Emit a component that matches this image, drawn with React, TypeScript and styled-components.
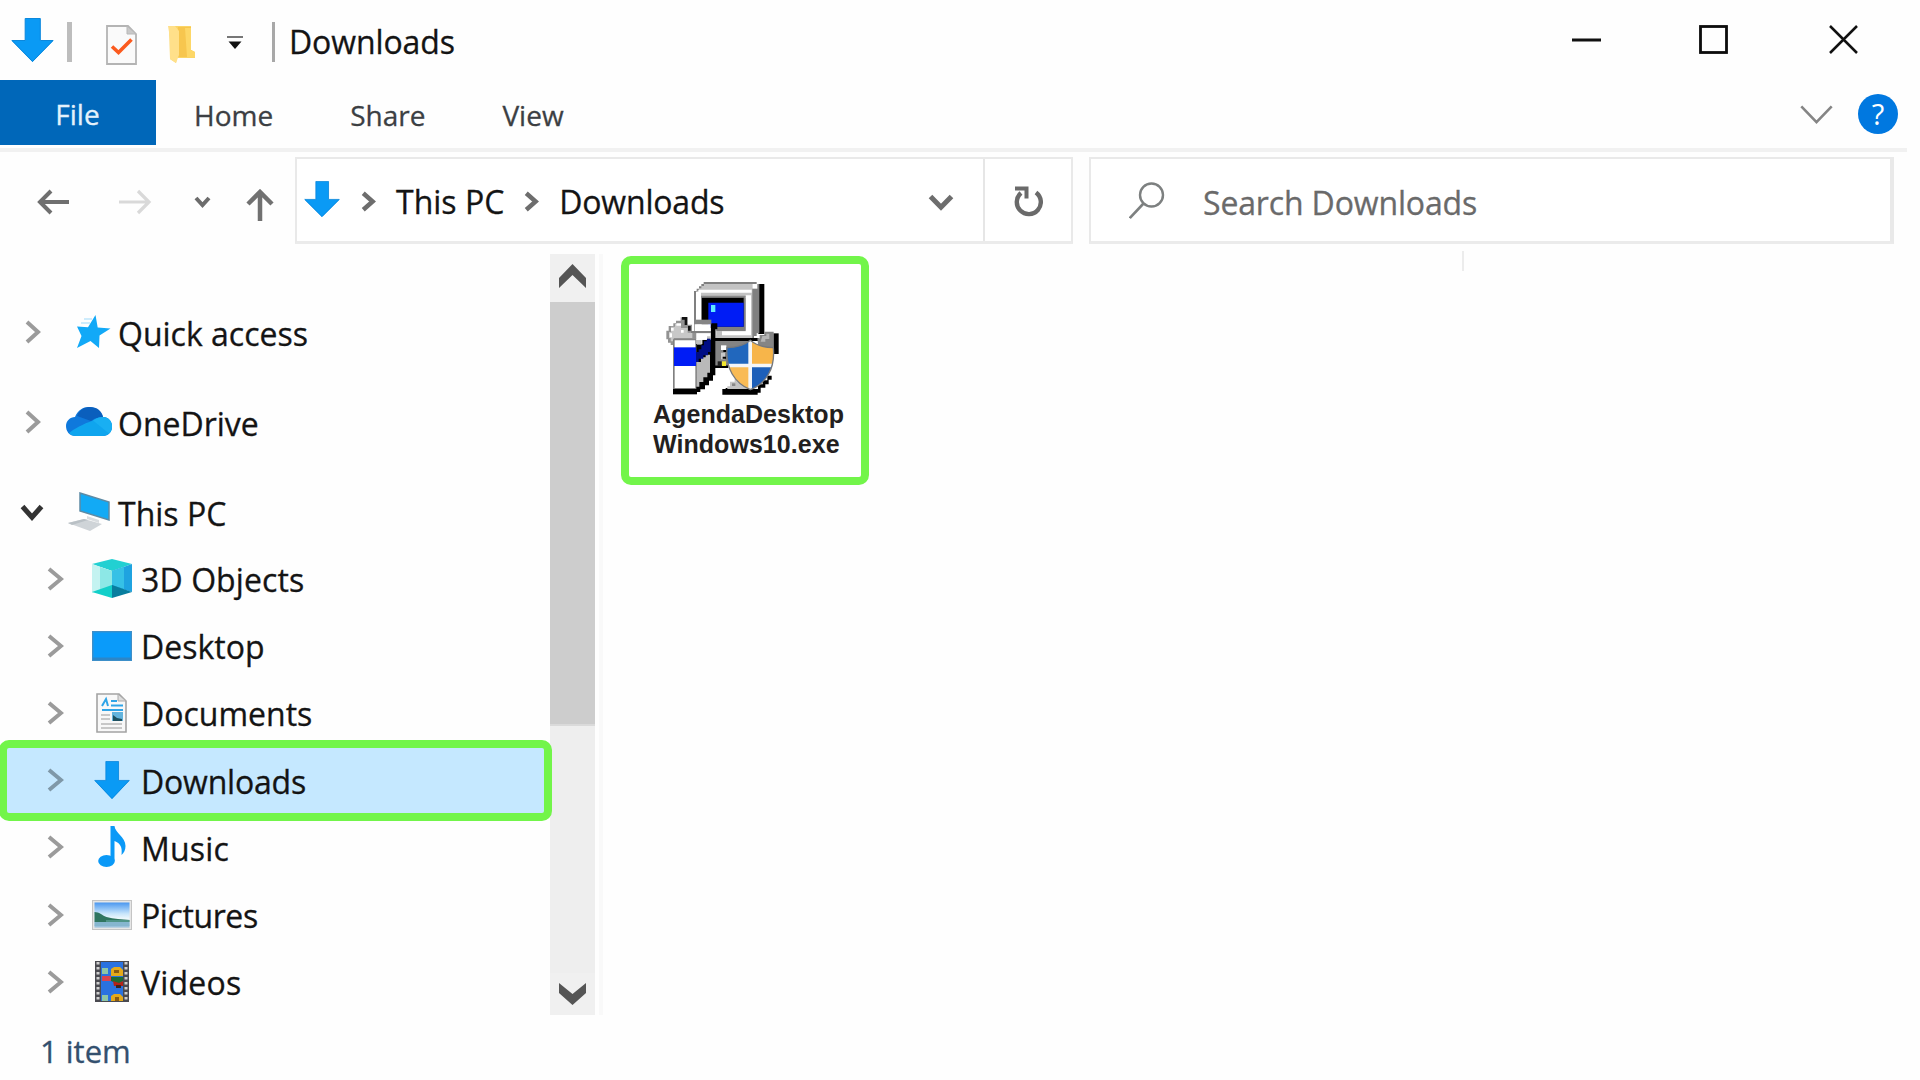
import React from "react";
import styled, { createGlobalStyle } from "styled-components";

const GREEN = "#72f54a";
const UI_FONT = `"Open Sans", "Noto Sans", sans-serif`;

const GlobalStyle = createGlobalStyle`
  * { box-sizing: border-box; }
  body { margin: 0; background: #fefefe; overflow: hidden; }
  svg { display: block; flex: none; }
`;

const Window = styled.div`
  width: 1920px;
  height: 1080px;
  display: flex;
  flex-direction: column;
  background: #fefefe;
  color: #111;
  font-family: ${UI_FONT};
  font-size: 32px;
`;

const Label = styled.span<{ $size?: number; $color?: string; $spacing?: number; $drop?: number }>`
  font-size: ${(p) => p.$size ?? 32}px;
  line-height: 44px;
  color: ${(p) => p.$color ?? "#141414"};
  -webkit-text-stroke: 0.3px currentColor;
  letter-spacing: ${(p) => p.$spacing ?? 0}px;
  padding-top: ${(p) => p.$drop ?? 0}px;
  white-space: nowrap;
`;

const TitleBar = styled.header`
  height: 80px;
  display: flex;
  align-items: flex-start;
  padding: 18px 62px 0 11px;
`;

const Slot = styled.div<{ $left?: number; $top?: number }>`
  margin-left: ${(p) => p.$left ?? 0}px;
  margin-top: ${(p) => p.$top ?? 0}px;
  flex: none;
  display: flex;
`;

const Divider = styled.div<{ $width: number; $left: number; $color: string }>`
  width: ${(p) => p.$width}px;
  height: 40px;
  margin: 4px 0 0 ${(p) => p.$left}px;
  background: ${(p) => p.$color};
`;

const WindowButtons = styled.div`
  margin: 7px 0 0 auto;
  display: grid;
  grid-template-columns: 127px 130px 29px;
`;

const Ribbon = styled.nav`
  width: 1907px;
  height: 72px;
  display: flex;
  align-items: flex-start;
  border-bottom: 4px solid #f1f1f1;
`;

const FileTab = styled.div`
  width: 156px;
  height: 65px;
  display: flex;
  justify-content: center;
  padding: 12px 1px 0 0;
  background: #0067b9;
`;

const Tab = styled.div<{ $left: number }>`
  margin-left: ${(p) => p.$left}px;
  padding-top: 12px;
`;

const RibbonTools = styled.div`
  margin: 14px 9px 0 auto;
  display: flex;
  align-items: center;
  gap: 25px;
`;

const Help = styled.div`
  width: 40px;
  height: 40px;
  border-radius: 50%;
  background: #0078e0;
  color: #fff;
  display: flex;
  align-items: center;
  justify-content: center;
  font-size: 29px;
  line-height: 40px;
`;

const NavBar = styled.div`
  height: 102px;
  display: flex;
  padding-top: 5px;
`;

const NavButtons = styled.div`
  width: 295px;
  height: 90px;
  display: flex;
  align-items: center;
  padding-left: 37px;
`;

const Field = styled.div<{ $width: number; $right?: number }>`
  width: ${(p) => p.$width}px;
  height: 87px;
  display: flex;
  align-items: center;
  border: 2px solid #e9e9e9;
  border-bottom: 3px solid #ebebeb;
  border-right-width: ${(p) => p.$right ?? 2}px;
  background: #fff;
`;

const SearchField = styled(Field)`
  margin-left: 16px;
`;

const FieldRule = styled.div`
  width: 2px;
  height: 82px;
  background: #e6e6e6;
`;

const Body = styled.main`
  height: 761px;
  display: flex;
`;

const Sidebar = styled.aside`
  width: 550px;
  padding-top: 33px;
`;

const Row = styled.div<{ $height: number; $top?: number; $child?: boolean }>`
  position: relative;
  height: ${(p) => p.$height}px;
  margin-top: ${(p) => p.$top ?? 0}px;
  display: grid;
  grid-template-columns: ${(p) => (p.$child ? "44px 41px 1fr" : "46px 52px 1fr")};
  align-items: center;
  padding-left: ${(p) => (p.$child ? 47 : 20)}px;
`;

const Selection = styled.div`
  position: absolute;
  left: -1px;
  top: -6.8px;
  width: 553px;
  height: 81px;
  border: 8px solid ${GREEN};
  border-radius: 10px;
  background: #c5e8ff;
`;

const Cell = styled.div`
  position: relative;
  display: flex;
  align-items: center;
`;

const Center = styled(Cell)`
  justify-content: center;
`;

const ScrollBar = styled.div`
  width: 45px;
  display: flex;
  flex-direction: column;
  background: #eee;
`;

const ScrollButton = styled.div<{ $height: number; $lift?: number }>`
  height: ${(p) => p.$height}px;
  display: flex;
  align-items: center;
  justify-content: center;
  padding-bottom: ${(p) => p.$lift ?? 0}px;
  background: #f0f0f0;
`;

const Thumb = styled.div`
  height: 424px;
  background: #cdcdcd;
  border-bottom: 2px solid #dadada;
`;

const Track = styled.div`
  flex: 1;
`;

const PaneEdge = styled.div`
  width: 4px;
  margin-left: 4px;
  background: #f9f9f9;
`;

const Files = styled.section`
  flex: 1;
  display: flex;
  align-items: flex-start;
  padding: 2px 0 0 18px;
`;

const FileCard = styled.div`
  width: 248px;
  height: 229px;
  border: 8px solid ${GREEN};
  border-radius: 10px;
  background: #fff;
  padding: 16px 0 0 24px;
`;

const FileIcon = styled.div`
  padding-left: 13px;
`;

const FileName = styled.div`
  margin-top: 4px;
  font-family: "Liberation Sans", Arial, sans-serif;
  font-weight: 700;
  font-size: 25px;
  line-height: 30px;
  letter-spacing: 0.05px;
  color: #231f20;
`;

const ColumnTick = styled.div`
  width: 2px;
  height: 20px;
  margin: -5px 0 0 593px;
  background: #ececec;
`;

const StatusBar = styled.footer`
  flex: 1;
  padding: 14px 0 0 40px;
`;

function DownArrow({ w, h }: { w: number; h: number }) {
  return (
    <svg width={w} height={h} viewBox="0 0 44 44" preserveAspectRatio="none">
      <path d="M14.5 0.5h15.5v22h13.5L22 44 0.5 22.5h14z" fill="#0a9af5" />
      <path d="M14.5 0.5h15.5v22h13L22 43.5 1 22.5h13.5z" fill="none" stroke="#0a87dc" strokeWidth="1" />
    </svg>
  );
}

type ChevronProps = { w: number; h: number; color: string; stroke: number; dir: "right" | "down" };
function Chevron({ w, h, color, stroke, dir }: ChevronProps) {
  const p = stroke / 2;
  const q = stroke * 0.75;
  const points =
    dir === "right"
      ? `${p},${p} ${w - q},${h / 2} ${p},${h - p}`
      : `${p},${p} ${w / 2},${h - q} ${w - p},${p}`;
  return (
    <svg width={w} height={h}>
      <polyline points={points} fill="none" stroke={color} strokeWidth={stroke} />
    </svg>
  );
}

const ChecklistIcon = () => (
  <svg width="31" height="40" viewBox="0 0 31 40">
    <path d="M1 1h21l8 8v30H1z" fill="#fafafa" stroke="#b4b4b4" strokeWidth="1.8" />
    <path d="M21 1v8h9z" fill="#c9c9c9" stroke="#b8b8b8" />
    <path d="M6 21.500l6.500 6 13-13" fill="none" stroke="#fb5a1e" strokeWidth="3.600" />
  </svg>
);

const FolderIcon = () => (
  <svg width="27" height="38" viewBox="0 0 27 38">
    <path d="M1 0h22v24l4 2v6H9l-1 5-6-4z" fill="#fbd566" />
    <path d="M10 1h13v23l3 2v5H8z" fill="#f7c64e" />
    <path d="M0 0h7l4 5v24l-3 8-6-4V12z" fill="#ffe08a" />
    <path d="M17 2h6v22l4 2v5h-8z" fill="#fdd767" />
  </svg>
);

const StarIcon = () => (
  <svg width="36" height="34" viewBox="0 0 36 34">
    <path d="M20.500 0l2.200 12.500L35.500 13.500 24.500 20.500 24 33 15.500 26 2 33l4.500-12L2 11.500l11 .8z" fill="#12a9f7" />
    <path d="M9 4h8M6 8h9" stroke="#bfe6fb" strokeWidth="1.500" />
  </svg>
);

const CloudIcon = () => (
  <svg width="46" height="30" viewBox="0 0 46 30">
    <path d="M10 29C3 29 0 24 0 19c0-5 4-9 9-9C12 3 17 0 23 0c7 0 12 4 14 10 5 0 9 4 9 9.500S42 29 37 29z" fill="#0f79dc" />
    <path d="M11 9C14 2 19 0 24 0c7 0 12 4 13 10-5 0-8 1-12 4z" fill="#0a5fbd" />
    <path d="M3 26C8 22 17 17 27 13.500c4-3 7-3.500 10-3.500 5 0 9 4 9 9.500S42 29 37 29H10c-3 0-5.500-1-7-3z" fill="#0fa5ee" />
    <path d="M27 13.500c4-3 7-3.500 10-3.500 5 0 9 4 9 9.500 0 3-1 5.500-3 7z" fill="#19aff2" />
  </svg>
);

const ComputerIcon = () => (
  <svg width="44" height="40" viewBox="0 0 44 40">
    <path d="M12 1l29 9v18l-29-9z" fill="#12aaf5" stroke="#5d8ba5" strokeWidth="1.500" />
    <path d="M0 31l16-4 18 5-12 7z" fill="#cfd4d8" />
    <path d="M0 31l16-4 4 1-16 5z" fill="#b9c0c5" />
    <path d="M19 24l12 4v3l-12-4z" fill="#d9dde0" />
  </svg>
);

const CubeIcon = () => (
  <svg width="40" height="39" viewBox="0 0 40 39">
    <path d="M0 5L20 0 40 5 20 12z" fill="#22d0d2" />
    <path d="M0 5l20 7v15L0 34z" fill="#c4f3f1" />
    <path d="M8 8l12 4v15L8 31z" fill="#8de8e6" />
    <path d="M20 12L40 5v28L20 27z" fill="#1fa3e0" />
    <path d="M20 12L32 8v22l-12-4z" fill="#36c1e6" />
    <path d="M0 33l20-7v13z" fill="#12cfc9" />
    <path d="M20 26l20 7-20 6z" fill="#087d9e" />
  </svg>
);

const DesktopIcon = () => (
  <svg width="40" height="30" viewBox="0 0 40 30">
    <rect x="0.700" y="0.700" width="38.600" height="28.600" fill="#0a9bfa" stroke="#3d8fc9" strokeWidth="1.400" />
    <rect x="1" y="26.500" width="38" height="2.500" fill="#2c86c8" />
  </svg>
);

const DocumentIcon = () => (
  <svg width="31" height="40" viewBox="0 0 31 40">
    <path d="M1 1h22l7 7v31H1z" fill="#f8f8f8" stroke="#a3a3a3" strokeWidth="1.600" />
    <path d="M22 1v7h8z" fill="#ddd" stroke="#aaa" />
    <path d="M6 13l4-7 2 7M15 8h6M15 12.500h12M6 17h21" fill="none" stroke="#2fa4e7" strokeWidth="2" />
    <rect x="16" y="19" width="11" height="9" fill="#64b4dd" />
    <path d="M17 22l4 3 5 1v2h-9z" fill="#1f5160" />
    <path d="M5 22h9M5 26h9M5 31h21M5 35h21" stroke="#b8b8b8" strokeWidth="1.600" />
  </svg>
);

const MusicIcon = () => (
  <svg width="28" height="42" viewBox="0 0 28 42">
    <path d="M12.500 0h4c.5 7 11 11 11 20 0 4-1.500 7-4 9 1-8-1-11.500-7-14v20h-4z" fill="#0a99f7" />
    <ellipse cx="8.500" cy="35" rx="8.300" ry="6" fill="#0a99f7" />
  </svg>
);

const PictureIcon = () => (
  <svg width="40" height="30" viewBox="0 0 40 30">
    <defs>
      <linearGradient id="sky" x1="0" y1="0" x2="0" y2="1">
        <stop offset="0" stopColor="#4a97f0" />
        <stop offset="0.45" stopColor="#c9e6fb" />
        <stop offset="0.65" stopColor="#eef8fc" />
        <stop offset="1" stopColor="#8fbad8" />
      </linearGradient>
    </defs>
    <rect x="0.500" y="0.500" width="39" height="29" fill="#e6e6e6" stroke="#c4c4c4" />
    <rect x="2.500" y="2.500" width="35" height="25" fill="url(#sky)" />
    <path d="M2.500 12c5 0 7 3 12 5 7 2 16 2 23 3v2h-35z" fill="#2f7560" />
    <path d="M2.500 22h35v4h-35z" fill="#86b6cf" />
    <path d="M14 20h23v2H14z" fill="#4f9487" />
  </svg>
);

const VideoIcon = () => (
  <svg width="34" height="41" viewBox="0 0 34 41">
    <rect width="34" height="41" fill="#4a4a50" />
    <rect x="6" y="1" width="22" height="39" fill="#2a72df" />
    <path d="M3 1v40M31 1v40" stroke="#cfcfcf" strokeWidth="3" strokeDasharray="2.500 2.500" />
    <rect x="7" y="7" width="6" height="6" fill="#8ec6a5" />
    <path d="M16 8l3-2h6l3 3v6H16z" fill="#e5a91a" />
    <path d="M19 9h5v3h-5z" fill="#8a5b12" />
    <path d="M7 15h9v5H7z" fill="#d8434f" />
    <path d="M16 16h12v4l-5 3-7-3z" fill="#1e6b35" />
    <path d="M18 20l6 2 4-2v5h-9z" fill="#b32317" />
    <path d="M21 24h5v3h-5z" fill="#3a2320" />
    <rect x="7" y="34" width="6" height="6" fill="#8ec6a5" />
    <path d="M16 40v-5l3-2h6l3 3v4z" fill="#e5a91a" />
    <path d="M20 36h4v4h-4z" fill="#8a5b12" />
  </svg>
);

const InstallerIcon = () => (
  <svg width="114" height="115" viewBox="139 30 342 345">
    {/* monitor */}
    <path d="M416 42h18v150h-18z" fill="#000" />
    <path d="M223 63h8v-7h7v-7h7v-7h7v-6h159v6h8v148h-8v8h-8v10H223z" fill="#808080" />
    <path d="M230 68v-6h8v-7h7v-7h8v-6h145v164H230z" fill="#c3c3c3" />
    <path d="M398 42h15v14h-15z" fill="#fff" />
    <path d="M236 59h160v9H236zM229 66h15v84h-15zM378 76h16v120h-16zM290 184h104v12H290z" fill="#fff" />
    <path d="M244 77h134v6H244z" fill="#8a8a8a" />
    <path d="M246 83h128v90H246z" fill="#000" />
    <path d="M290 170h87v13h-87zM372 84h6v98h-6z" fill="#808080" />
    <path d="M266 98h106v72H266z" fill="#001cf5" />
    <path d="M274 105h13v21h-13z" fill="#5fe9ff" />
    <path d="M290 183h17v23h-17z" fill="#c0c0c0" />
    <path d="M285 204h132v9H285z" fill="#000" />
    {/* base */}
    <path d="M286 213h110v72H286z" fill="#848484" />
    <path d="M304 226h16v14h-16z" fill="#fff" />
    <path d="M304 248h12v20h-12z" fill="#c8c8c8" />
    <path d="M311 240h10v6h-10zM309 260h10v6h-10zM286 286h40v8h-40z" fill="#000" />
    <path d="M294 274h12v14h-12z" fill="#222" />
    <path d="M307 274h12v14h-12z" fill="#f3e72f" />
    {/* feet */}
    <path d="M308 357h10v-3h14v3h83v-14h14v-12h14v-14h13v12h-9v14h-10v10h-14v15h-9v6H308z" fill="#000" />
    <path d="M323 357v-8h8v-14h14v-8h48v30z" fill="#c4c4c4" />
    <path d="M337 340h10v8h-10z" fill="#888" />
    {/* left hand */}
    <path d="M140 182h7v-14h14v-8h8v-8h14v-10h20v22h14v22h12v26h-64v13h-12v-7h-8v-10h-5z" fill="#929292" />
    <path d="M148 186h6v-16h12v-8h18v12h20v14h14v16h-56v10h-9v-10h-5z" fill="#c8c8c8" />
    <path d="M154 174h8v8h-8zM170 160h14v7h-14zM150 190h7v12h-7zM184 180h8v8h-8z" fill="#fff" />
    <path d="M187 141h16v24h-8v-16h-8zM205 168h8v14h-8z" fill="#111" />
    {/* carton */}
    <path d="M274 160h19v18h-6v138h-7v16h-12v14h-12v12h-14v8h-14V210h46z" fill="#000" />
    <path d="M160 208h70v150h-70z" fill="#808080" />
    <path d="M165 211h62v143h-62z" fill="#fff" />
    <path d="M163 232h66v56h-66z" fill="#001cf5" />
    <path d="M160 357h72v16h-72z" fill="#000" />
    <path d="M230 276h14v-14h14v-8h13v54h-8v14h-12v14h-12v14h-9z" fill="#b9b9b9" />
    <path d="M229 246h8v-8h8v-12h8v-12h8v-8h12v40h-8v10h-14v10h-14v10h-8z" fill="#000d85" />
    <path d="M223 149h52v14h-52z" fill="#858585" />
    <path d="M225 163h48v20h-48zM230 190h42v9h-10v10h-14v13h-18z" fill="#fff" />
    <path d="M214 183h60v6h-60z" fill="#808080" />
    <path d="M232 210h14v14h-14z" fill="#c0c0c0" />
    {/* right hand */}
    <path d="M461 190h16v62h-16z" fill="#000" />
    <path d="M413 205h7v-10h14v-10h28v54h-45z" fill="#858585" />
    <path d="M428 198h12v-7h9v16h-12v8h-14z" fill="#b5b5b5" />
    {/* shield */}
    <clipPath id="shield">
      <path d="M392 211C372 228 347 233 322 233C317 295 345 340 392 359C440 340 467 295 461 233C437 233 412 228 392 211z" />
    </clipPath>
    <g clipPath="url(#shield)">
      <rect x="315" y="205" width="77" height="82" fill="#2167bd" />
      <rect x="392" y="205" width="80" height="82" fill="#f7b54a" />
      <rect x="315" y="287" width="77" height="80" fill="#f9bb55" />
      <rect x="392" y="287" width="80" height="80" fill="#1d5fb9" />
      <path d="M386 205h11v160h-11zM315 281h157v11H315z" fill="#f4f6f8" />
    </g>
    <path
      d="M392 211C372 228 347 233 322 233C317 295 345 340 392 359C440 340 467 295 461 233C437 233 412 228 392 211z"
      fill="none"
      stroke="#77797c"
      strokeWidth="4"
    />
  </svg>
);

const children: { name: string; icon: React.ReactNode; selected?: boolean; spacing?: number }[] = [
  { name: "3D Objects", icon: <CubeIcon />, spacing: 0.1 },
  { name: "Desktop", icon: <DesktopIcon /> },
  { name: "Documents", icon: <DocumentIcon /> },
  { name: "Downloads", icon: <DownArrow w={36} h={38} />, selected: true, spacing: -0.2 },
  { name: "Music", icon: <MusicIcon />, spacing: 0.2 },
  { name: "Pictures", icon: <PictureIcon />, spacing: -0.4 },
  { name: "Videos", icon: <VideoIcon />, spacing: 0.2 },
];

const roots = [
  { name: "Quick access", icon: <Slot $left={9}><StarIcon /></Slot>, height: 90, top: 0, open: false },
  { name: "OneDrive", icon: <CloudIcon />, height: 90, top: 0, open: false },
  { name: "This PC", icon: <Slot $left={2}><ComputerIcon /></Slot>, height: 66, top: 12, open: true },
];

export default function App() {
  return (
    <Window>
      <GlobalStyle />
      <TitleBar>
        <DownArrow w={43} h={44} />
        <Divider $width={5} $left={13} $color="#bdbdbd" />
        <Slot $left={34} $top={7}><ChecklistIcon /></Slot>
        <Slot $left={31} $top={8}><FolderIcon /></Slot>
        <Slot $left={32} $top={18}>
          <svg width="16" height="14" viewBox="0 0 16 14">
            <path d="M0 1h16" stroke="#777" strokeWidth="2" />
            <path d="M1.500 5.500h13L8 13z" fill="#111" />
          </svg>
        </Slot>
        <Divider $width={3} $left={29} $color="#a8a8a8" />
        <Slot $left={14} $top={2}><Label $spacing={-0.1}>Downloads</Label></Slot>
        <WindowButtons>
          <svg width="29" height="29"><path d="M0 15h29" stroke="#111" strokeWidth="3" /></svg>
          <svg width="29" height="29">
            <rect x="1.500" y="1.500" width="26" height="26" fill="none" stroke="#0c0c0c" strokeWidth="2.800" />
          </svg>
          <svg width="29" height="29"><path d="M1 1l27 27M28 1L1 28" stroke="#111" strokeWidth="2.500" /></svg>
        </WindowButtons>
      </TitleBar>

      <Ribbon>
        <FileTab><Label $size={28} $color="#e4f1fb">File</Label></FileTab>
        <Tab $left={38}><Label $size={28} $color="#3c3f43">Home</Label></Tab>
        <Tab $left={77}><Label $size={28} $color="#3c3f43">Share</Label></Tab>
        <Tab $left={77}><Label $size={28} $color="#3c3f43">View</Label></Tab>
        <RibbonTools>
          <Chevron w={33} h={19} color="#858585" stroke={2.6} dir="down" />
          <Help>?</Help>
        </RibbonTools>
      </Ribbon>

      <NavBar>
        <NavButtons>
          <svg width="33" height="26" viewBox="0 0 33 26">
            <path d="M32 13H3M14 2L3 13l11 11" fill="none" stroke="#6f6f6f" strokeWidth="4" />
          </svg>
          <Slot $left={49}>
            <svg width="33" height="26" viewBox="0 0 33 26">
              <path d="M0 13h30M19 2l11 11-11 11" fill="none" stroke="#d9d9d9" strokeWidth="3.200" />
            </svg>
          </Slot>
          <Slot $left={42}><Chevron w={17} h={12} color="#6c6c6c" stroke={4} dir="down" /></Slot>
          <Slot $left={35} $top={5}>
            <svg width="28" height="32" viewBox="0 0 28 32">
              <path d="M14 32V4M2 15L14 3l12 12" fill="none" stroke="#717171" strokeWidth="4.500" />
            </svg>
          </Slot>
        </NavButtons>

        <Field $width={778}>
          <Slot $left={7} $top={-3}><DownArrow w={36} h={36} /></Slot>
          <Slot $left={21} $top={3}><Chevron w={15} h={21} color="#6d6d6d" stroke={4.5} dir="right" /></Slot>
          <Slot $left={20} $top={3}><Label>This PC</Label></Slot>
          <Slot $left={20} $top={3}><Chevron w={15} h={21} color="#6d6d6d" stroke={4.5} dir="right" /></Slot>
          <Slot $left={20} $top={3}><Label $spacing={-0.2}>Downloads</Label></Slot>
          <Slot $left={204} $top={5}><Chevron w={26} h={17} color="#6d6d6d" stroke={5} dir="down" /></Slot>
          <Slot $left={29}><FieldRule /></Slot>
          <Slot $left={28} $top={3}>
            <svg width="30" height="31" viewBox="0 0 30 31">
              <path d="M23 6.500A12 12 0 1 1 8 7" fill="none" stroke="#6a6a6a" strokeWidth="4.400" />
              <path d="M2 2.500h11.500v10" fill="none" stroke="#6a6a6a" strokeWidth="4" />
            </svg>
          </Slot>
        </Field>

        <SearchField $width={805} $right={4}>
          <Slot $left={38}>
            <svg width="36" height="37" viewBox="0 0 36 37">
              <circle cx="22.500" cy="13" r="11.500" fill="none" stroke="#7d8080" strokeWidth="2.400" />
              <path d="M14.500 21.500L0.800 36" stroke="#7d8080" strokeWidth="2.600" />
            </svg>
          </Slot>
          <Slot $left={38} $top={6}><Label $color="#6a6a6a" $spacing={-0.15}>Search Downloads</Label></Slot>
        </SearchField>
      </NavBar>

      <Body>
        <Sidebar>
          {roots.map((r) => (
            <Row key={r.name} $height={r.height} $top={r.top}>
              <Cell>
                {r.open ? (
                  <Chevron w={24} h={17} color="#333" stroke={5} dir="down" />
                ) : (
                  <Slot $left={5}><Chevron w={16} h={24} color="#9b9b9b" stroke={4} dir="right" /></Slot>
                )}
              </Cell>
              <Cell>{r.icon}</Cell>
              <Cell><Label $drop={3}>{r.name}</Label></Cell>
            </Row>
          ))}
          {children.map((c) => (
            <Row key={c.name} $height={67.2} $child>
              {c.selected && <Selection />}
              <Cell>
                <Chevron w={17} h={24} color={c.selected ? "#7f98a8" : "#9b9b9b"} stroke={4} dir="right" />
              </Cell>
              <Center>{c.icon}</Center>
              <Cell><Slot $left={9}><Label $drop={3} $spacing={c.spacing}>{c.name}</Label></Slot></Cell>
            </Row>
          ))}
        </Sidebar>

        <ScrollBar>
          <ScrollButton $height={48} $lift={5}>
            <svg width="27" height="25" viewBox="0 0 27 25">
              <path d="M0 25v-10L13.500 1 27 15v10L13.500 12z" fill="#555" />
            </svg>
          </ScrollButton>
          <Thumb />
          <Track />
          <ScrollButton $height={42}>
            <svg width="27" height="22" viewBox="0 0 27 22">
              <path d="M0 0v10L13.500 22 27 10V0L13.500 11z" fill="#555" />
            </svg>
          </ScrollButton>
        </ScrollBar>
        <PaneEdge />

        <Files>
          <FileCard>
            <FileIcon><InstallerIcon /></FileIcon>
            <FileName>AgendaDesktop<br />Windows10.exe</FileName>
          </FileCard>
          <ColumnTick />
        </Files>
      </Body>

      <StatusBar><Label $size={31} $color="#33506e">1 item</Label></StatusBar>
    </Window>
  );
}
